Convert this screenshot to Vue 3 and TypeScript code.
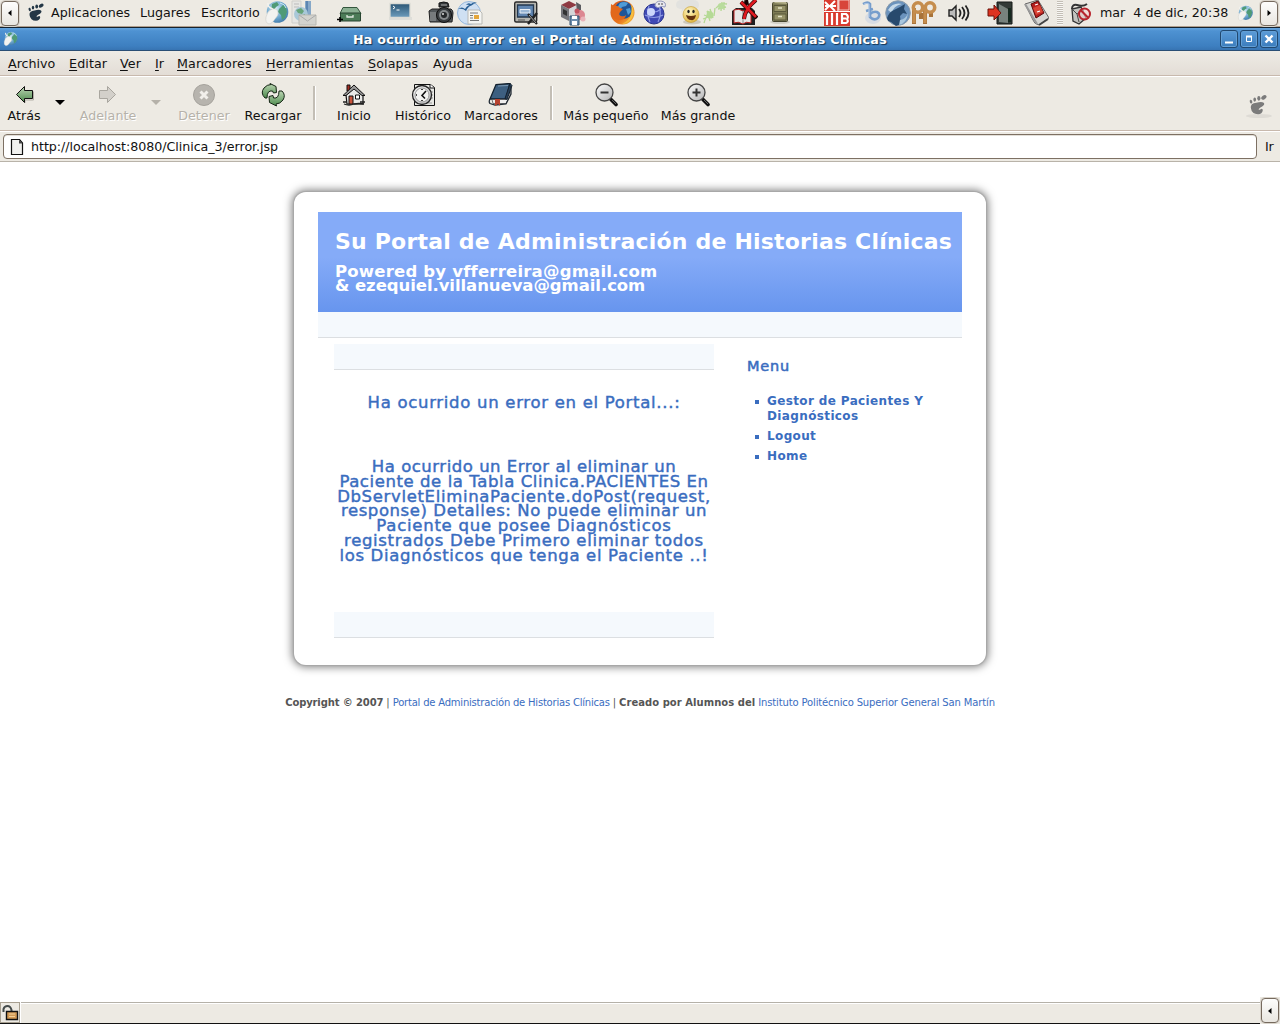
<script setup lang="ts">
interface MenuEntry {
  key: string
  rest: string
  cls: string
}

const menus: MenuEntry[] = [
  { key: 'A', rest: 'rchivo', cls: 'm-archivo' },
  { key: 'E', rest: 'ditar', cls: 'm-editar' },
  { key: 'V', rest: 'er', cls: 'm-ver' },
  { key: 'I', rest: 'r', cls: 'm-ir' },
  { key: 'M', rest: 'arcadores', cls: 'm-marcadores' },
  { key: 'H', rest: 'erramientas', cls: 'm-herramientas' },
  { key: 'S', rest: 'olapas', cls: 'm-solapas' },
  { key: '', rest: 'Ayuda', cls: 'm-ayuda' },
]

const links: string[] = ['Gestor de Pacientes Y Diagnósticos', 'Logout', 'Home']

const errorLines: string[] = [
  'Ha ocurrido un Error al eliminar un',
  'Paciente de la Tabla Clinica.PACIENTES En',
  'DbServletEliminaPaciente.doPost(request,',
  'response) Detalles: No puede eliminar un',
  'Paciente que posee Diagnósticos',
  'registrados Debe Primero eliminar todos',
  'los Diagnósticos que tenga el Paciente ..!',
]
</script>

<template>
  <div class="screen">
    <svg class="defs" width="0" height="0">
      <defs>
        <radialGradient id="globe" cx=".4" cy=".35" r=".7">
          <stop offset="0" stop-color="#d8eef6" /><stop offset=".6" stop-color="#6fa9d0" /><stop offset="1" stop-color="#3e78a8" />
        </radialGradient>
        <linearGradient id="green" x1="0" y1="0" x2="0" y2="1">
          <stop offset="0" stop-color="#bcd6b4" /><stop offset="1" stop-color="#4c8a4c" />
        </linearGradient>
        <linearGradient id="steel" x1="0" y1="0" x2="1" y2="1">
          <stop offset="0" stop-color="#fdfdfd" /><stop offset="1" stop-color="#b4b4b4" />
        </linearGradient>
        <linearGradient id="fox" x1="0" y1="0" x2="1" y2="1">
          <stop offset="0" stop-color="#d9561a" /><stop offset=".6" stop-color="#e8741c" /><stop offset="1" stop-color="#f5c648" />
        </linearGradient>
        <radialGradient id="smile" cx=".4" cy=".3" r=".8">
          <stop offset="0" stop-color="#fff6c0" /><stop offset="1" stop-color="#dcae32" />
        </radialGradient>
        <linearGradient id="term" x1="0" y1="0" x2="0" y2="1">
          <stop offset="0" stop-color="#2c5675" /><stop offset="1" stop-color="#6d9dbd" />
        </linearGradient>
        <symbol id="globe-mouse" viewBox="0 0 26 26">
          <circle cx="13.500" cy="12" r="10.800" fill="url(#globe)" />
          <path d="M8 4l5-2 2 3-3 2-2 3-3 1zM15 9l4-4 3 2 1 5-2 6-3 2-1-5-3-3z" fill="#4f9a76" />
          <path d="M9 9q-6-2-5-6" fill="none" stroke="#f2f2ee" stroke-width="1.600" />
          <path d="M2 17q1-6 6-8 5-1 6 3 1 3-3 7-3 5-6 5-4-1-3-7z" fill="#f3f3f0" stroke="#c6c6c2" stroke-width=".5" />
          <path d="M16 3q5 1 6 5" fill="none" stroke="#cde8f0" />
        </symbol>
        <symbol id="foot" viewBox="0 0 17 19">
          <ellipse cx="14.200" cy="2.700" rx="2.600" ry="1.700" transform="rotate(-35 14.200 2.700)" />
          <ellipse cx="9.700" cy="3.500" rx="1.400" ry="2.100" />
          <ellipse cx="6" cy="4.600" rx="1.200" ry="1.900" />
          <ellipse cx="2.700" cy="6.500" rx="1.100" ry="1.700" transform="rotate(-15 2.700 6.500)" />
          <path d="M2.500 12Q2 8 7.500 7.400q5-1.200 6.500.1 1.400 1.400-1 3.200-2.600 1.300-3.600 2.600.4.900 1.900-.1 2-1 1.900 1.200-.5 3-4.200 3.400Q3.300 17.700 2.500 12z" />
        </symbol>
      </defs>
    </svg>

    <!-- desktop panel -->
    <header class="panel">
      <button class="hide left"><svg width="4" height="6"><path d="M3.500 0v6L0 3z" /></svg></button>
      <svg class="gnome" width="17" height="19" fill="#243746"><use href="#foot" width="17" height="19" /></svg>
      <span class="p1">Aplicaciones</span>
      <span class="p2">Lugares</span>
      <span class="p3">Escritorio</span>
      <div class="launchers">
        <svg viewBox="0 0 26 26"><use href="#globe-mouse" width="26" height="26" /></svg>
        <svg viewBox="0 0 26 26">
          <path d="M1 1h9v22H1z" fill="#e6e6e3" stroke="#cfcfcb" /><path d="M3 4h5M3 7h5" stroke="#bbb" />
          <path d="M14 1h6v16h-6z" fill="#86a8c8" /><path d="M15 1h2v15h-2z" fill="#5d86b2" />
          <circle cx="10" cy="14" r="7" fill="#a9c8d8" /><path d="M5 10l5-2 3 3-2 3-4-1zM9 16l5-2v5l-3 1z" fill="#67a47a" />
          <path d="M8 15h17v10H8z" fill="#d3d3ce" stroke="#b9b9b3" /><path d="M8 15l8.500 6 8.500-6" fill="none" stroke="#aaa" />
        </svg>
        <svg viewBox="0 0 26 26">
          <path d="M6 7.500h14l4 6H3z" fill="#8bb193" stroke="#34563d" /><path d="M3.500 13h20v8h-20z" fill="#4b7b57" stroke="#284531" />
          <path d="M10 15v2h6v-2" fill="none" stroke="#dfe8df" stroke-width="1.300" /><path d="M3 17v5M0 19.500h6" stroke="#000" stroke-width="1.600" />
        </svg>
        <svg viewBox="0 0 26 26">
          <path d="M1 17h23v3H1z" fill="#deded9" /><path d="M2 3.500h20v14H2z" fill="url(#term)" stroke="#dcdcd6" stroke-width="1.300" />
          <path d="M5 6l2 1.500-2 1.500M8.500 10h3" fill="none" stroke="#fff" />
        </svg>
        <svg viewBox="0 0 26 26">
          <path d="M11 3q5-2 9 0l1 4H11z" fill="#34383a" stroke="#151515" /><path d="M13 5h6" stroke="#aaa" />
          <path d="M1 11l3-2h19q2 1 2 4l-1 9H2z" fill="#52575a" stroke="#222" /><path d="M2 12h6v9H2z" fill="#777b7d" />
          <circle cx="16" cy="15" r="7.500" fill="#393d40" stroke="#111" /><circle cx="16" cy="15" r="5" fill="#868a8c" /><circle cx="16" cy="15" r="3" fill="#25282a" /><circle cx="15" cy="14" r="1" fill="#ddd" />
        </svg>
        <svg viewBox="0 0 26 26">
          <circle cx="12" cy="13" r="11.500" fill="#cfe0f3" stroke="#96b8dd" />
          <path d="M1 9q4-3 7 0 3-5 9-5-6 2-8 7-3-3-8-2zM9 5q2-3 5-1 3-3 6-1-4 0-6 3-2-2-5-1z" fill="#285f94" />
          <path d="M11 10h11l3 3v11H11z" fill="#f5f5f2" stroke="#b9b9b5" /><path d="M13 13h8M13 15.500h3M13 18h3M13 20.500h9" stroke="#777" /><path d="M17 15h5v4h-5z" fill="#e4a53a" />
        </svg>
        <svg viewBox="0 0 26 26">
          <rect x="1.700" y="2" width="22" height="20" rx="1.500" fill="#b6b6b0" stroke="#2b2b2b" stroke-width="1.400" /><path d="M4.500 5h16v12h-16z" fill="#6186b1" stroke="#24384f" stroke-width="1.300" />
          <path d="M7 9.500h10v3.500H7z" fill="#9cb8d6" stroke="#e8eef5" /><path d="M5 20h7" stroke="#555" />
          <path d="M15 14l9 10M24 13l-9 11" stroke="#222" stroke-width="2.400" /><path d="M16 15l7 8" stroke="#aaa" />
        </svg>
        <svg viewBox="0 0 26 26">
          <path d="M1 5l8-4 8 4-8 4z" fill="#8e3a42" /><path d="M1 5l8 4v12l-8-4z" fill="#77777b" /><path d="M9 9l8-4v12l-8 4z" fill="#d5d5d8" /><path d="M3 9l4 2v5l-4-2z" fill="#333" />
          <path d="M16 2l5 3v5l-4 2z" fill="#5c5c60" /><circle cx="20" cy="15" r="5" fill="#dc8791" /><circle cx="17" cy="11" r="2.500" fill="#c1525f" /><circle cx="23" cy="19" r="2.500" fill="#e9b3b9" />
          <path d="M10 16h9v9h-9z" fill="#6d8dad" stroke="#34536f" /><path d="M12 16h5v3h-5zM12 21h5v4h-5z" fill="#fff" />
        </svg>
        <svg viewBox="0 0 26 26">
          <circle cx="13.500" cy="12.500" r="12" fill="url(#fox)" /><circle cx="14.500" cy="10" r="8.800" fill="#1f5597" />
          <path d="M11 3q4-2 8 0l-2 3-4 1-2 3-3-2z" fill="#4f9bd6" /><path d="M17 9l4-1 1 4-3 3z" fill="#4f9bd6" />
          <path d="M2 4l3 2q4-1 6 2l3 1-3 3q-2 3 1 4 3 1 5-1-1 5-6 5-6 0-8-5-2-6-1-11z" fill="#e2681b" />
          <path d="M22 4q5 7 1 14-4 6-10 6 8-4 9-10 1-5 0-10z" fill="#f7bf3e" />
        </svg>
        <svg viewBox="0 0 26 26">
          <circle cx="12" cy="14" r="10" fill="#3f49b4" stroke="#2a348f" /><path d="M5 9q7 6 14 0M3 15q9 5 18 0M7 6q-3 8 1 16M17 6q3 8-1 16" fill="none" stroke="#8f9be4" stroke-width="1.200" />
          <circle cx="9" cy="12" r="4" fill="#ccd6fb" /><path d="M13 6q0-5 6-5 6 1 4 6-3-1-5 0-2 2-5-1z" fill="#e7e7ef" stroke="#9298ba" /><circle cx="17" cy="4" r=".8" fill="#333" /><circle cx="20" cy="4" r=".8" fill="#333" />
        </svg>
        <svg viewBox="0 0 26 26">
          <path d="M1 5q0-5 6-5h11q6 0 6 5t-6 4H9l-3 4 1-4Q1 9 1 5z" fill="#e2e2df" /><ellipse cx="17" cy="22" rx="9" ry="2.500" fill="#cdc9bd" />
          <circle cx="16" cy="14.500" r="8" fill="url(#smile)" stroke="#c39a34" stroke-width=".6" /><ellipse cx="13.500" cy="11.500" rx="1.200" ry="1.800" fill="#222" /><ellipse cx="18.500" cy="11.500" rx="1.200" ry="1.800" fill="#222" /><path d="M11 15q5 2 10 0-1 6-5 5-4 0-5-5z" fill="#63320f" />
        </svg>
        <svg viewBox="0 0 26 26">
          <g stroke="#b4d893" stroke-width="1.300" fill="none"><path d="M2 23q2-8 8-11M2 15l8 3M5 11l3 10M10 13l-5-2M8 9l3 9M13 8l-1 8M1 19l8-3M16 5l4 4M20 2l-1 9M14 8q5-5 11-4M16 9l8-2M22 2v8" /></g>
          <circle cx="8" cy="15" r="3.500" fill="#b5da96" /><circle cx="19" cy="6" r="3" fill="#b9dc9c" />
        </svg>
        <svg viewBox="0 0 26 26">
          <path d="M0 11l4-3h16l3 3v14H0z" fill="#202020" /><path d="M2 10q5-2 9 1 5-3 8-1v13q-5-2-8 1-5-3-9-1z" fill="#e7e7e5" stroke="#b82020" /><path d="M11 11v12" stroke="#888" />
          <path d="M9 2l16 16M24 0Q13 9 12 19M14 0l1 5" stroke="#180000" stroke-width="4" fill="none" /><path d="M9 2l15 15M24 0Q13 9 12 19" stroke="#df1a20" stroke-width="2.800" fill="none" />
        </svg>
        <svg viewBox="0 0 26 26">
          <ellipse cx="12" cy="22" rx="10" ry="2" fill="#d3d0c6" /><rect x="4.500" y="2.500" width="15" height="19" rx="1" fill="#7c7a54" stroke="#45442c" /><path d="M5 3l2-1h11l1 2z" fill="#b5b28c" />
          <path d="M6 5.500h12v6H6zM6 14h12v6H6z" fill="#959267" stroke="#5a583b" /><path d="M10 8h4M10 16.500h4" stroke="#e4e2c5" stroke-width="1.600" />
        </svg>
        <svg viewBox="0 0 26 26">
          <path d="M0 0h26v26H0z" fill="#d93a2e" /><path d="M15 0h10v10H15z" fill="#d8453b" stroke="#f3c5bf" /><path d="M0 11.500h26M14 0v12" stroke="#fff" stroke-width="1.200" />
          <path d="M1 6h11M6 6l5-5M6 6l5 5M1 2l4 4-4 4" stroke="#fff" stroke-width="2" fill="none" /><path d="M3 13v12M8 13v12M13 13v12" stroke="#fff" stroke-width="2.200" /><path d="M18 14v9h4q3-1 1-4 2-3-1-5zM18 18.500h4" fill="none" stroke="#fff" stroke-width="2.200" />
        </svg>
        <svg viewBox="0 0 26 26">
          <ellipse cx="15" cy="18" rx="8" ry="6" fill="#d9dde3" /><path d="M5 4q5-3 7 0v13q4 4 8 1 3-4-1-6-4-1-7 2M8 11l7-2" fill="none" stroke="#769dcc" stroke-width="2.600" /><path d="M6 4q3-1 5 0v13" fill="none" stroke="#b3cceb" />
        </svg>
        <svg viewBox="0 0 26 26">
          <circle cx="13" cy="13" r="12.300" fill="#6b93bd" stroke="#8b9baa" /><path d="M3 10q5-8 14-6-9 2-10 9z" fill="#c5d9e9" />
          <path d="M2 18q2-6 7-8l6-3 5-3-1 5 3 5-4-1-3 3 1 8-5 2-5-4-3-1z" fill="#284a6d" /><path d="M15 20q6-1 8-7-1 10-9 12z" fill="#a8c6dd" />
        </svg>
        <svg viewBox="0 0 26 26">
          <path d="M3 24V8M14 24V8M10 13v6M20 13v4" stroke="#a87339" stroke-width="4" /><circle cx="7" cy="7.500" r="4.700" fill="none" stroke="#c58d4d" stroke-width="3.600" /><circle cx="19" cy="7.500" r="4.700" fill="none" stroke="#c58d4d" stroke-width="3.600" /><path d="M3 23V8M14 23V8" stroke="#c58d4d" stroke-width="3" />
        </svg>
        <svg viewBox="0 0 26 26">
          <path d="M3 10h3l4-4v14l-4-4H3z" fill="#bbb" stroke="#222" stroke-width="1.400" /><path d="M13 9q3 4 0 8M16 7q5 6 0 12M19.500 5.500q6 7.500 0 15" fill="none" stroke="#222" stroke-width="1.800" />
        </svg>
        <svg viewBox="0 0 26 26">
          <path d="M10 2h15v22H10z" fill="#333a37" stroke="#171b19" /><path d="M12 4l9 5v14l-9-1z" fill="#78827d" /><path d="M21 8h3v14h-3z" fill="#16291f" />
          <path d="M1 9h6V5l7 8-7 7v-4H1z" fill="#dd3320" stroke="#6d120a" />
        </svg>
        <svg viewBox="0 0 26 26">
          <path d="M2 4L15 0l11 18-10 7q-5-1-6-5z" fill="#d6d6d3" stroke="#666" /><path d="M2 4l9 15 3 5" stroke="#999" stroke-width="2" fill="none" />
          <path d="M8 4l7-3 6 12-8 5z" fill="#b51d1d" stroke="#5c0909" /><path d="M10 8l7-3 3 7-7 3z" fill="#d94435" /><path d="M12 5l3-1M14 12l3-1" stroke="#fff" stroke-width="1.300" /><path d="M25 19l-9 6" stroke="#444" stroke-width="2" />
        </svg>
      </div>
      <div class="grip"></div>
      <svg class="nomouse" viewBox="0 0 24 24" width="24" height="24">
        <path d="M3 8q0-5 5-4 6 2 10-1" fill="none" stroke="#333" stroke-width="2" /><path d="M3 8l9-2 5 11-7 6-6-3z" fill="#c4c4c0" stroke="#333" stroke-width="1.300" /><path d="M4 9l4 4 7-4M8 13l2 8" fill="none" stroke="#444" />
        <circle cx="15.500" cy="13" r="5.500" fill="#f3d2cf" fill-opacity=".6" stroke="#b8232c" stroke-width="2" /><path d="M11.500 9l8 8" stroke="#b8232c" stroke-width="2" />
      </svg>
      <span class="clock">mar&nbsp; 4 de dic, 20:38</span>
      <svg class="tray" width="17" height="17"><use href="#globe-mouse" width="17" height="17" /></svg>
      <button class="hide right"><svg width="4" height="6"><path d="M.5 0v6L4 3z" /></svg></button>
    </header>

    <!-- window title -->
    <div class="titlebar">
      <svg class="ticon" width="16" height="16"><use href="#globe-mouse" width="16" height="16" /></svg>
      <span class="title">Ha ocurrido un error en el Portal de Administración de Historias Clínicas</span>
      <div class="wm">
        <i><svg width="16" height="16"><path d="M4 11.500h8" stroke="#fff" stroke-width="2" /></svg></i>
        <i><svg width="16" height="16"><path d="M5.500 5.500h5v5h-5z" fill="none" stroke="#fff" /><path d="M5 5.500h6" stroke="#fff" stroke-width="2" /></svg></i>
        <i><svg width="16" height="16"><path d="M4.500 4.500l7 7M11.500 4.500l-7 7" stroke="#fff" stroke-width="2.400" /></svg></i>
      </div>
    </div>

    <nav class="menubar">
      <span v-for="m in menus" :key="m.rest" :class="m.cls"><u v-if="m.key">{{ m.key }}</u>{{ m.rest }}</span>
    </nav>

    <div class="toolbar">
      <div class="tool w40">
        <svg width="24" height="24"><path d="M13 20v-3h8.500V8.500" fill="none" stroke="#b3afa7" /><path d="M4.500 11.500l8-8v4h8v8h-8v4z" fill="url(#green)" stroke="#111" /></svg>
        <span>Atrás</span>
      </div>
      <div class="drop"><svg width="10" height="6"><path d="M0 0h10L5 5z" fill="#000" /></svg></div>
      <div class="tool w68 off">
        <svg width="24" height="24"><path d="M19.500 11.500l-8-8v4h-8v8h8v4z" fill="#d3d0ca" stroke="#a9a69f" /></svg>
        <span>Adelante</span>
      </div>
      <div class="drop d2"><svg width="10" height="6"><path d="M0 0h10L5 5z" fill="#b5b1a9" /></svg></div>
      <div class="tool w72 off">
        <svg width="24" height="24"><circle cx="12" cy="12" r="10.500" fill="#b7b4ae" stroke="#a5a29c" /><path d="M8.500 8.500l7 7M15.500 8.500l-7 7" stroke="#f1efeb" stroke-width="3" /></svg>
        <span>Detener</span>
      </div>
      <div class="tool w66">
        <svg width="24" height="24" viewBox="0 0 24 24">
          <path d="M4 15Q-1 10 3 5q3-3.500 7-3.500L9 .500l6 3 .500 6-3 .500-1-2Q6 7 6 15z" fill="url(#green)" stroke="#142414" />
          <path d="M21 8q4 4 1 9-3 4-7 4l.500 2-7-3.500L8 13.500l4-1 .500 2.500Q18 16 18 8z" fill="url(#green)" stroke="#142414" />
        </svg>
        <span>Recargar</span>
      </div>
      <div class="sep s14"></div>
      <div class="tool w68">
        <svg width="24" height="24" viewBox="0 0 24 24">
          <path d="M5 2h3v6H5z" fill="#a52c21" stroke="#111" /><path d="M4 12l8-9 9 9v9H5z" fill="#e9e9e7" stroke="#111" stroke-width="1.200" /><path d="M1 12.500L12 2l11 10.500h-3L12 6l-8 6.500z" fill="#999" stroke="#111" />
          <path d="M7 13h4v8H7z" fill="#c8543c" stroke="#111" /><path d="M13.500 12h4v4h-4z" fill="#fff" stroke="#111" /><path d="M2 21q5 2 10 0 5-1 10 0M1 19h4M18 19h5" stroke="#222" stroke-width="1.300" fill="none" />
        </svg>
        <span>Inicio</span>
      </div>
      <div class="tool w70">
        <svg width="24" height="24" viewBox="0 0 24 24">
          <path d="M3.500 1.500h16l4 3v18h-20z" fill="#e8e8e4" stroke="#111" /><path d="M19 1v4h4" fill="#fff" stroke="#111" /><path d="M19 9h3M20 12h2M20 15h2M15 20h6" stroke="#999" />
          <circle cx="11" cy="12" r="9.500" fill="url(#steel)" stroke="#222" stroke-width="1.300" /><circle cx="11" cy="12" r="7" fill="#f3f3f1" stroke="#999" /><path d="M15 8l-4 4.500 3 3M11 6v1M11 17v1M5 12h1" fill="none" stroke="#111" stroke-width="1.600" />
        </svg>
        <span>Histórico</span>
      </div>
      <div class="tool w86">
        <svg width="26" height="24" viewBox="0 0 26 24">
          <path d="M2 16L8 1.500l14-1L18 16z" fill="#3d5f80" stroke="#14212e" stroke-width="1.300" /><path d="M4 16.500h14l4-9v5l-4 8H5z" fill="#eee" stroke="#444" stroke-width=".7" /><path d="M22 .500l2 2-5 14-2-1z" fill="#263f58" stroke="#14212e" /><path d="M2 16q-1.500 3 0 4.500l5 1.500 11-1 5-10V3" fill="none" stroke="#222c36" stroke-width="1.300" /><path d="M7 16h5v7l-2-2-3 2z" fill="#b8432f" /><path d="M10 3l10-.500" stroke="#7c99b3" />
        </svg>
        <span>Marcadores</span>
      </div>
      <div class="sep s12"></div>
      <div v-for="z in ['Más pequeño', 'Más grande']" :key="z" class="tool" :class="z === 'Más grande' ? 'w84' : 'w100'">
        <svg width="24" height="24" viewBox="0 0 24 24">
          <path d="M17 16.500l5 5" stroke="#111" stroke-width="3.600" stroke-linecap="round" /><path d="M18 17l4 4" stroke="#666" />
          <circle cx="10.500" cy="9.500" r="8.500" fill="url(#steel)" stroke="#444" stroke-width="1.300" /><path d="M6.500 9.500h8" stroke="#333" stroke-width="2" /><path v-if="z === 'Más grande'" d="M10.500 5.500v8" stroke="#333" stroke-width="2" />
        </svg>
        <span>{{ z }}</span>
      </div>
      <div class="throbber">
        <svg width="30" height="28" viewBox="0 0 30 28"><ellipse cx="15" cy="24" rx="13" ry="2" fill="#dedbd5" /><use href="#foot" x="4" y="1.500" width="19" height="23" fill="#7b7b7b" /></svg>
      </div>
    </div>

    <div class="location">
      <div class="entry">
        <svg width="14" height="16"><path d="M1.500 .500h8l3 3.500v11.500h-11z" fill="#f1f1ef" stroke="#111" stroke-width="1.200" /><path d="M9 1v3.500h3.500z" fill="#444" /></svg>
        <span>http://localhost:8080/Clinica_3/error.jsp</span>
      </div>
      <span class="go">Ir</span>
    </div>

    <main class="page">
      <section class="card">
        <div class="banner">
          <h1>Su Portal de Administración de Historias Clínicas</h1>
          <h2><span class="by1">Powered by vfferreira@gmail.com</span><br /><span class="by2">&amp; ezequiel.villanueva@gmail.com</span></h2>
        </div>
        <div class="strip"></div>
        <div class="cols">
          <div class="main">
            <div class="strip"></div>
            <p class="lead">Ha ocurrido un error en el Portal...:</p>
            <p class="msg"><span v-for="l in errorLines" :key="l">{{ l }}</span></p>
            <div class="strip"></div>
          </div>
          <aside>
            <h3>Menu</h3>
            <ul>
              <li v-for="l in links" :key="l">{{ l }}</li>
            </ul>
          </aside>
        </div>
      </section>
      <footer>
        <b class="c1">Copyright © 2007</b><span>|</span><a class="c2">Portal de Administración de Historias Clínicas</a><span>|</span><b class="c3">Creado por Alumnos del</b><a class="c4">Instituto Politécnico Superior General San Martín</a>
      </footer>
    </main>

    <div class="status">
      <div class="lock">
        <svg width="18" height="18"><path d="M2.500 8V5q1-3 4-3t4 4v2" fill="none" stroke="#444b4b" stroke-width="2" /><path d="M5.500 7.500h11v8h-11z" fill="#d39a55" stroke="#111" stroke-width="1.400" /><path d="M8 10h6M8 12.500h6" stroke="#f2cf98" /></svg>
      </div>
      <div class="line"></div>
      <div class="corner"><button class="hide"><svg width="4" height="6"><path d="M3.500 0v6L0 3z" /></svg></button></div>
    </div>
  </div>
</template>

<style>
body { margin: 0; overflow: hidden; }
</style>

<style scoped>
* { box-sizing: border-box; }
.screen { width: 1280px; height: 1024px; display: flex; flex-direction: column; background: #fff; font: 12.67px/16px "DejaVu Sans", sans-serif; color: #111; white-space: nowrap; overflow: hidden; }
.defs { position: absolute; }
svg { display: block; flex: none; }
.panel { height: 27px; flex: none; display: flex; align-items: center; background: #edeae3; border-bottom: 1px solid #b09e8c; }
.panel > * { flex: none; }
.hide { width: 18px; height: 25px; flex: none; padding: 0; display: flex; align-items: center; justify-content: center; border: 1px solid #766a5e; border-radius: 4px; background: linear-gradient(#fdfdfc, #e9e6e0); box-shadow: 0 0 0 1px #d9d4cb; }
.hide.left { margin-left: 1px; }
.hide.right { margin-left: 6px; }
.gnome { margin-left: 8px; margin-top: -2px; }
.p1 { margin-left: 7px; width: 89px; }
.p2 { width: 61px; letter-spacing: .05px; }
.p3 { width: 63px; letter-spacing: -.08px; }
.launchers { display: grid; grid-template-columns: 27px 46px 51px 40px 29px 56px 47px 49px 33px 33px 27px 30px 36px 56px 34px 27px 26px 35px 41px 36px 34px; }
.launchers svg { width: 26px; height: 26px; }
.grip { width: 6px; height: 24px; background: repeating-linear-gradient(#c3beb5 0 1px, #f8f7f4 1px 2px); }
.nomouse { margin-left: 6px; }
.clock { margin-left: 7px; width: 129px; }
.tray { margin-left: 8px; }
.titlebar { height: 24px; flex: none; display: flex; align-items: center; background: linear-gradient(#64a3dc 0, #4e92d2 3px, #3d7fc0 18px, #3774b2); border-top: 1px solid #14222f; border-bottom: 1px solid #2a4e75; }
.ticon { margin-left: 3px; }
.title { margin-left: 334px; width: 860px; padding-top: 1px; color: #fff; font-weight: 700; letter-spacing: .235px; text-shadow: 1px 1px 1px #14324f; }
.wm { display: flex; gap: 2px; margin-left: 7px; }
.wm i { width: 18px; height: 18px; border: 1px solid #21486f; border-radius: 3px; background: linear-gradient(#5c9cd8, #3b7cbc); box-shadow: inset 0 0 0 1px #639fd5; }
.menubar { height: 25px; flex: none; display: flex; align-items: center; padding: 1px 0 0 8px; background: linear-gradient(#eeebe5, #e3ddd6); border-bottom: 1px solid #c8b9ad; letter-spacing: .12px; }
.menubar u { text-underline-offset: 2px; text-decoration-thickness: 1px; }
.m-archivo { width: 61px; letter-spacing: 0; }
.m-editar { width: 51px; }
.m-ver { width: 35px; }
.m-ir { width: 22px; }
.m-marcadores { width: 89px; }
.m-herramientas { width: 102px; }
.m-solapas { width: 65px; }
.toolbar { height: 55px; flex: none; display: flex; padding: 0 6px 0 4px; background: #edeae3; border-top: 1px solid #fff; border-bottom: 1px solid #c8b9ad; }
.tool { display: flex; flex-direction: column; align-items: center; padding-top: 6px; flex: none; letter-spacing: .05px; }
.tool span { margin-top: 1px; }
.off span { color: #b6b2aa; text-shadow: 1px 1px 0 #fff; }
.w40 { width: 40px; }
.w66 { width: 66px; }
.w68 { width: 68px; }
.w70 { width: 70px; }
.w72 { width: 72px; }
.w84 { width: 84px; }
.w86 { width: 86px; }
.w100 { width: 100px; }
.drop { width: 30px; padding: 23px 0 0 11px; }
.d2 { width: 26px; padding-left: 9px; }
.sep { margin-top: 9px; height: 35px; padding-left: 7px; }
.sep::before { content: ""; display: block; width: 2px; height: 34px; background: #c3beb5; border-right: 1px solid #fff; }
.s14 { width: 14px; }
.s12 { width: 12px; padding-left: 6px; }
.throbber { margin-left: auto; padding-top: 15px; }
.location { height: 31px; flex: none; display: flex; align-items: center; background: #edeae3; border-top: 1px solid #fff; border-bottom: 1px solid #b9b3a9; padding-left: 3px; }
.entry { width: 1254px; height: 25px; display: flex; align-items: center; padding-left: 6px; background: #fff; border: 1px solid #7d7063; border-radius: 4px; box-shadow: inset 0 1px 0 #e3dfd8; letter-spacing: -.04px; }
.entry span { margin-left: 7px; }
.go { margin-left: 8px; letter-spacing: -.3px; }
.page { flex: 1; min-height: 0; display: flex; flex-direction: column; align-items: center; padding-top: 30px; background: #fff; }
.card { width: 692px; height: 473px; flex: none; padding: 20px 24px; border-radius: 12px; background: #fff; box-shadow: 0 0 1px 1px #a8a8a8, 0 0 8px 2px rgba(0, 0, 0, .5); }
.banner { height: 100px; padding: 15px 0 0 17px; color: #fff; background: linear-gradient(#85abf8 0 45%, #6795ee); }
h1 { margin: 0; font-size: 22px; line-height: 30px; letter-spacing: .2px; }
h2 { margin: 8px 0 0; font-size: 16.500px; line-height: 14px; }
.by1 { letter-spacing: .2px; }
.by2 { letter-spacing: -.07px; }
.strip { height: 26px; background: #f5f9fd; border-bottom: 1px solid #dcdfe2; }
.cols { display: flex; padding: 6px 0 0 16px; }
.main { width: 380px; }
.lead, .msg { margin: 0; color: #3a6dbf; font-size: 16.500px; text-align: center; -webkit-text-stroke: .45px #3a6dbf; }
.lead { margin-top: 25px; line-height: 15px; letter-spacing: .7px; }
.msg { margin: 50px 0 48px; line-height: 14.800px; letter-spacing: .66px; }
.msg span { display: block; }
.msg span:nth-child(1) { letter-spacing: .52px; }
.msg span:nth-child(2), .msg span:nth-child(4) { letter-spacing: .58px; }
.msg span:nth-child(5) { letter-spacing: .74px; }
aside { margin-left: 33px; width: 200px; color: #3a6dbf; }
h3 { margin: 14px 0 0; font-size: 14.500px; line-height: 16px; font-weight: 400; -webkit-text-stroke: .55px #3a6dbf; letter-spacing: .8px; }
ul { margin: 20px 0 0; padding: 0 0 0 20px; list-style: none; width: 190px; font-weight: 700; font-size: 12px; line-height: 15px; white-space: normal; letter-spacing: .37px; }
li { margin-bottom: 5px; display: flex; }
li::before { content: ""; width: 4px; height: 4px; flex: none; margin: 6px 8px 0 -12px; background: #3a6dbf; }
footer { display: flex; margin-top: 31px; font-size: 10px; line-height: 14px; color: #555; gap: 3px; }
footer a { color: #3a6dbf; }
.c1 { letter-spacing: -.12px; }
.c2 { letter-spacing: -.21px; }
.c3 { letter-spacing: .04px; }
.c4 { letter-spacing: -.14px; }
.status { height: 27px; flex: none; display: flex; align-items: flex-end; border-bottom: 1px solid #111; }
.lock { width: 20px; height: 21px; border: 1px solid #a79f90; background: #edeae3; padding: 1px 0 0; }
.line { flex: 1; height: 21px; margin-left: 1px; background: #edeae3; border-top: 1px solid #b5b1a8; box-shadow: inset 0 1px 0 #fff; }
.corner { width: 20px; height: 27px; padding: 1px; background: #edeae3; margin-bottom: -1px; }
</style>
